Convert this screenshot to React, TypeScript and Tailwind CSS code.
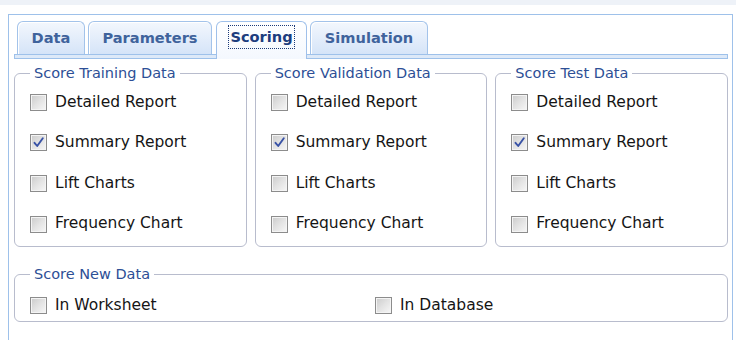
import React from "react";

const FONT = { fontFamily: '"DejaVu Sans", Verdana, sans-serif' };

function Check({ checked }: { checked?: boolean }) {
  return (
    <span className="relative flex h-[17px] w-[17px] shrink-0 items-center justify-center border border-[#8c8c8c] bg-gradient-to-br from-[#cbcbcb] via-[#e3e3e3] to-[#f7f7f7] shadow-[inset_0_0_0_1px_#f4f4f4]">
      {checked && (
        <svg width="13" height="13" viewBox="0 0 13 13">
          <path d="M2.5 6.8 L5.2 10 L10.8 2.2" fill="none" stroke="#3852a6" strokeWidth="1.9" strokeLinecap="round" strokeLinejoin="round" />
        </svg>
      )}
    </span>
  );
}

function Row({ label, checked }: { label: string; checked?: boolean }) {
  return (
    <div className="flex h-[40.6px] items-center gap-[8px] text-[15.5px] text-[#151515]">
      <Check checked={checked} />
      <span>{label}</span>
    </div>
  );
}

function Group({ title }: { title: string }) {
  return (
    <fieldset className="rounded-[6px] border border-[#b8bccd] pb-[2px] pl-[15px]">
      <legend className="ml-[0px] px-[4px] text-[14.5px] leading-[18px] text-[#2d4f96]">{title}</legend>
      <Row label="Detailed Report" />
      <Row label="Summary Report" checked />
      <Row label="Lift Charts" />
      <Row label="Frequency Chart" />
    </fieldset>
  );
}

function Tab({ label, w, active }: { label: string; w: string; active?: boolean }) {
  if (active) {
    return (
      <div className={`relative z-10 flex h-[38px] items-start justify-center rounded-t-[6px] border border-b-0 border-[#9fc0ea] bg-gradient-to-b from-[#ffffff] to-[#f4f8fe] pt-[3px] ${w}`}>
        <span className="border border-dotted border-[#1c3a78] px-[1px] py-[1px] text-[14.6px] font-bold leading-[20px] text-[#1d3d7e]">{label}</span>
      </div>
    );
  }
  return (
    <div className={`flex h-[33px] items-center justify-center rounded-t-[6px] border border-b-0 border-[#a3c3ea] bg-gradient-to-b from-[#f3f7fd] to-[#d5e4f8] shadow-[inset_1px_1px_0_#ffffff] pb-[1px] ${w}`}>
      <span className="text-[14.6px] font-bold leading-[20px] text-[#3f639c]">{label}</span>
    </div>
  );
}

export default function App() {
  return (
    <div className="h-[340px] w-[736px] overflow-hidden bg-white" style={FONT}>
      <div className="h-[5px] bg-[#eef2f8]" />
      <div className="ml-[8px] mt-[9px] h-[330px] w-[725px] border border-b-0 border-[#9ec1ea] pt-[6px]">
        <div className="pl-[5px] pr-[4px]">
          <div className="flex h-[33px] items-start pl-[3px]">
            <Tab label="Data" w="w-[68px]" />
            <div className="w-[3px]" />
            <Tab label="Parameters" w="w-[124px]" />
            <div className="w-[4px]" />
            <Tab label="Scoring" w="w-[91px]" active />
            <div className="w-[3px]" />
            <Tab label="Simulation" w="w-[118px]" />
          </div>
          <div className="h-[5px] border border-[#9ec1ea] bg-[#dde9f8]" />
          <div className="mt-[5px] grid grid-cols-3 gap-[8px]">
            <Group title="Score Training Data" />
            <Group title="Score Validation Data" />
            <Group title="Score Test Data" />
          </div>
          <fieldset className="mt-[18px] rounded-[6px] border border-[#b8bccd] pl-[15px] pt-[7px]">
            <legend className="ml-[0px] px-[4px] text-[14.5px] leading-[18px] text-[#2d4f96]">Score New Data</legend>
            <div className="flex h-[31px] items-center text-[15.5px] text-[#151515]">
              <div className="flex w-[345px] items-center gap-[8px]">
                <Check />
                <span>In Worksheet</span>
              </div>
              <div className="flex items-center gap-[8px]">
                <Check />
                <span>In Database</span>
              </div>
            </div>
          </fieldset>
        </div>
      </div>
    </div>
  );
}
